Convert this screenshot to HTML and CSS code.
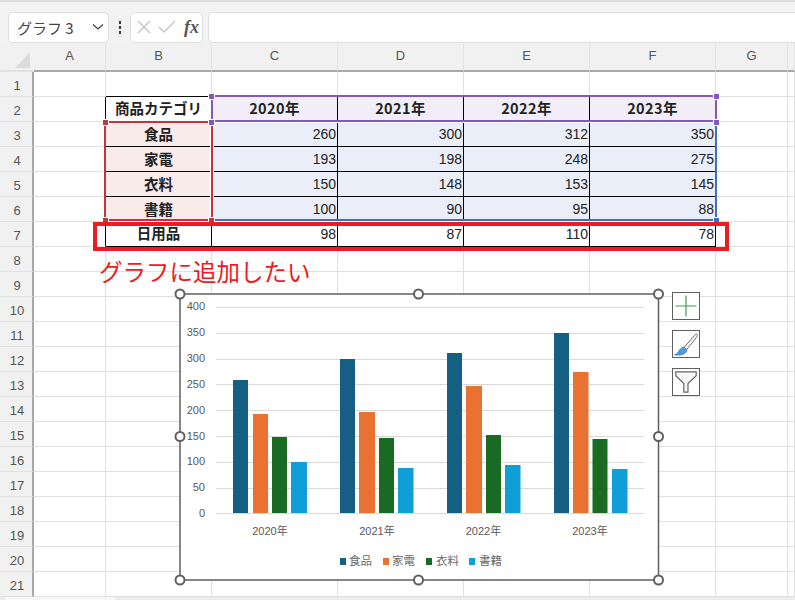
FILE: index.html
```html
<!DOCTYPE html>
<html lang="ja">
<head>
<meta charset="utf-8">
<title>グラフ 3</title>
<link rel="stylesheet" href="styles.css">
</head>
<body>
<div class="app">
  <div class="formula-bar">
    <div class="box name-box"><span>グラフ 3</span>
      <svg class="chev" width="12" height="8" viewBox="0 0 12 8"><path d="M1 1.5 L6 6 L11 1.5" fill="none" stroke="#444" stroke-width="1.3"/></svg>
    </div>
    <div class="dots"><i></i><i></i><i></i></div>
    <div class="box fx-box">
      <svg width="14" height="14" viewBox="0 0 14 14"><path d="M1 1 L13 13 M13 1 L1 13" stroke="#c4c4c4" stroke-width="1.3" fill="none"/></svg>
      <svg width="18" height="14" viewBox="0 0 18 14"><path d="M1 7 L6 12 L17 1" stroke="#c4c4c4" stroke-width="1.3" fill="none"/></svg>
      <span class="fx">fx</span>
    </div>
    <div class="box formula-input"></div>
  </div>

  <div class="sheet-wrap">
    <div class="sheet">
      <div class="hd corner"><span class="tri"></span></div><div class="hd">A</div><div class="hd">B</div><div class="hd">C</div><div class="hd">D</div><div class="hd">E</div><div class="hd">F</div><div class="hd">G</div><div class="hd"></div>

      <div class="rh">1</div><div class="c"></div><div class="c bb"></div><div class="c bb"></div><div class="c bb"></div><div class="c bb"></div><div class="c bb"></div><div class="c"></div><div class="c"></div>

      <div class="rh">2</div><div class="c br"></div><div class="c t lbl">商品カテゴリ</div><div class="c t yr">2020年</div><div class="c t yr">2021年</div><div class="c t yr">2022年</div><div class="c t yr">2023年</div><div class="c"></div><div class="c"></div>

      <div class="rh">3</div><div class="c br"></div><div class="c t cat">食品</div><div class="c t val">260</div><div class="c t val">300</div><div class="c t val">312</div><div class="c t val">350</div><div class="c"></div><div class="c"></div>

      <div class="rh">4</div><div class="c br"></div><div class="c t cat">家電</div><div class="c t val">193</div><div class="c t val">198</div><div class="c t val">248</div><div class="c t val">275</div><div class="c"></div><div class="c"></div>

      <div class="rh">5</div><div class="c br"></div><div class="c t cat">衣料</div><div class="c t val">150</div><div class="c t val">148</div><div class="c t val">153</div><div class="c t val">145</div><div class="c"></div><div class="c"></div>

      <div class="rh">6</div><div class="c br"></div><div class="c t cat">書籍</div><div class="c t val">100</div><div class="c t val">90</div><div class="c t val">95</div><div class="c t val">88</div><div class="c"></div><div class="c"></div>

      <div class="rh">7</div><div class="c br"></div><div class="c t lbl">日用品</div><div class="c t num">98</div><div class="c t num">87</div><div class="c t num">110</div><div class="c t num">78</div><div class="c"></div><div class="c"></div>

      <div class="rh">8</div><div class="c"></div><div class="c"></div><div class="c"></div><div class="c"></div><div class="c"></div><div class="c"></div><div class="c"></div><div class="c"></div>
      <div class="rh">9</div><div class="c"></div><div class="c"></div><div class="c"></div><div class="c"></div><div class="c"></div><div class="c"></div><div class="c"></div><div class="c"></div>
      <div class="rh">10</div><div class="c"></div><div class="c"></div><div class="c"></div><div class="c"></div><div class="c"></div><div class="c"></div><div class="c"></div><div class="c"></div>
      <div class="rh">11</div><div class="c"></div><div class="c"></div><div class="c"></div><div class="c"></div><div class="c"></div><div class="c"></div><div class="c"></div><div class="c"></div>
      <div class="rh">12</div><div class="c"></div><div class="c"></div><div class="c"></div><div class="c"></div><div class="c"></div><div class="c"></div><div class="c"></div><div class="c"></div>
      <div class="rh">13</div><div class="c"></div><div class="c"></div><div class="c"></div><div class="c"></div><div class="c"></div><div class="c"></div><div class="c"></div><div class="c"></div>
      <div class="rh">14</div><div class="c"></div><div class="c"></div><div class="c"></div><div class="c"></div><div class="c"></div><div class="c"></div><div class="c"></div><div class="c"></div>
      <div class="rh">15</div><div class="c"></div><div class="c"></div><div class="c"></div><div class="c"></div><div class="c"></div><div class="c"></div><div class="c"></div><div class="c"></div>
      <div class="rh">16</div><div class="c"></div><div class="c"></div><div class="c"></div><div class="c"></div><div class="c"></div><div class="c"></div><div class="c"></div><div class="c"></div>
      <div class="rh">17</div><div class="c"></div><div class="c"></div><div class="c"></div><div class="c"></div><div class="c"></div><div class="c"></div><div class="c"></div><div class="c"></div>
      <div class="rh">18</div><div class="c"></div><div class="c"></div><div class="c"></div><div class="c"></div><div class="c"></div><div class="c"></div><div class="c"></div><div class="c"></div>
      <div class="rh">19</div><div class="c"></div><div class="c"></div><div class="c"></div><div class="c"></div><div class="c"></div><div class="c"></div><div class="c"></div><div class="c"></div>
      <div class="rh">20</div><div class="c"></div><div class="c"></div><div class="c"></div><div class="c"></div><div class="c"></div><div class="c"></div><div class="c"></div><div class="c"></div>
      <div class="rh">21</div><div class="c"></div><div class="c"></div><div class="c"></div><div class="c"></div><div class="c"></div><div class="c"></div><div class="c"></div><div class="c"></div>
    </div>

    <!-- range selection overlays -->
    <div class="sel sel-blue"></div>
    <div class="sel sel-red"></div>
    <div class="sel sel-purple"></div>
    <span class="hdl h-p h1"></span><span class="hdl h-p h2"></span><span class="hdl h-p h3"></span><span class="hdl h-p h4"></span>
    <span class="hdl h-r h5"></span><span class="hdl h-r h6"></span><span class="hdl h-r h7"></span><span class="hdl h-b h8"></span>

    <!-- annotation -->
    <div class="callout"></div>
    <div class="note">グラフに追加したい</div>

    <!-- chart -->
    <svg class="chart" width="500" height="306" viewBox="170 284 500 306">
      <rect x="180" y="294" width="478.500" height="286" fill="#fff" stroke="#5f5f5f" stroke-width="1.500"/>
      <g stroke="#d9d9d9" stroke-width="1">
        <path d="M216 307.500H644M216 333.500H644M216 359.500H644M216 384.500H644M216 410.500H644M216 436.500H644M216 462.500H644M216 488.500H644M216 513.500H644"/>
      </g>
      <g fill="#156082">
        <rect x="233" y="380" width="15" height="133"/><rect x="340" y="359" width="15" height="154"/><rect x="447" y="353" width="15" height="160"/><rect x="554" y="333" width="15" height="180"/>
      </g>
      <g fill="#E97132">
        <rect x="253" y="414" width="15" height="99"/><rect x="359" y="412" width="16" height="101"/><rect x="466" y="386" width="16" height="127"/><rect x="573" y="372" width="15.500" height="141"/>
      </g>
      <g fill="#196B24">
        <rect x="272" y="437" width="15" height="76"/><rect x="379" y="438" width="15" height="75"/><rect x="486" y="435" width="15" height="78"/><rect x="592.500" y="439" width="15" height="74"/>
      </g>
      <g fill="#0F9ED5">
        <rect x="291" y="462" width="16" height="51"/><rect x="398" y="468" width="15.500" height="45"/><rect x="505" y="465" width="15.500" height="48"/><rect x="612" y="469" width="15.500" height="44"/>
      </g>
      <g class="ax" text-anchor="end">
        <text x="205" y="310">400</text><text x="205" y="336">350</text><text x="205" y="362">300</text><text x="205" y="388">250</text><text x="205" y="414">200</text><text x="205" y="440">150</text><text x="205" y="465">100</text><text x="205" y="491">50</text><text x="205" y="517">0</text>
      </g>
      <g class="ax" text-anchor="middle">
        <text x="270" y="535">2020年</text><text x="377" y="535">2021年</text><text x="483.500" y="535">2022年</text><text x="590" y="535">2023年</text>
      </g>
      <rect x="340" y="558" width="6" height="7" fill="#156082"/><text class="ax lg" x="349" y="565">食品</text>
      <rect x="383" y="558" width="6" height="7" fill="#E97132"/><text class="ax lg" x="392" y="565">家電</text>
      <rect x="426" y="558" width="6" height="7" fill="#196B24"/><text class="ax lg" x="436" y="565">衣料</text>
      <rect x="469" y="558" width="6" height="7" fill="#0F9ED5"/><text class="ax lg" x="479" y="565">書籍</text>
      <g fill="#fff" stroke="#5f5f5f" stroke-width="2">
        <circle cx="180" cy="294" r="4.500"/><circle cx="418.500" cy="294" r="4.500"/><circle cx="658.500" cy="294" r="4.500"/>
        <circle cx="180" cy="436.500" r="4.500"/><circle cx="658.500" cy="436.500" r="4.500"/>
        <circle cx="180" cy="580" r="4.500"/><circle cx="418.500" cy="580" r="4.500"/><circle cx="658.500" cy="580" r="4.500"/>
      </g>
    </svg>

    <div class="chart-tools">
      <div class="tool">
        <svg width="22" height="22" viewBox="0 0 22 22"><path d="M0.500 11H21.500M11 0.500V21.500" stroke="#3f9a50" stroke-width="1.200" fill="none"/></svg>
      </div>
      <div class="tool">
        <svg width="24" height="24" viewBox="0 0 24 24">
          <path d="M10 15.500 L20.500 3.500 C22 1.500 23.600 1.800 23.400 3.500 C22.800 5.500 17 12 12.500 17.800 Z" fill="#fff" stroke="#666" stroke-width="1"/>
          <path d="M9.500 15 L13 18.300 C12 22 7 23.800 0.500 22.800 C3.500 22 4 20.500 5.500 18 C6.500 16.500 8 15.600 9.500 15 Z" fill="#4f9be0" stroke="#2f79bf" stroke-width="0.800"/>
        </svg>
      </div>
      <div class="tool">
        <svg width="22" height="22" viewBox="0 0 22 22"><path d="M0.800 0.800H21.200V4.800L13 12.500V21.200H8.800V12.500L0.800 4.800Z" fill="#f7f7f7" stroke="#666" stroke-width="1.200"/></svg>
      </div>
    </div>
  </div>
  <div class="status-strip"><span class="tab"></span></div>
</div>
</body>
</html>
```
FILE: styles.css
```css
* { box-sizing: border-box; }
html, body { margin: 0; padding: 0; background: #fff; }
body { font-family: "Liberation Sans", "Noto Sans CJK JP", sans-serif; }
.app { width: 795px; height: 600px; overflow: hidden; background: #f1f1f1; display: flex; flex-direction: column; }

/* formula bar */
.formula-bar { height: 43px; flex: none; display: flex; align-items: center; gap: 5px; padding: 10px 0 1px 8px; border-top: 2px solid #dedede; background: #f3f3f3; }
.box { height: 31px; background: #fff; border: 1px solid #dfdfdf; border-radius: 5px; display: flex; align-items: center; }
.name-box { width: 101px; padding: 0 4px 0 8px; justify-content: space-between; font: 15px "Noto Sans CJK JP", sans-serif; color: #444; }
.dots { width: 12px; display: flex; flex-direction: column; align-items: center; gap: 2px; margin-right: -1px; }
.dots i { width: 2px; height: 3px; background: #333; }
.fx-box { width: 73px; gap: 7px; padding-left: 6px; }
.fx { font: italic bold 18px "Liberation Serif", serif; color: #555; margin-left: 1px; }
.formula-input { flex: 1; border-radius: 5px 0 0 5px; border-right: 0; }

/* sheet */
.sheet-wrap { position: relative; flex: none; height: 554px; }
.sheet { display: grid; grid-template-columns: 34px 72px 106px 126px 126px 126px 126px 72px 7px; grid-template-rows: 29px repeat(21, 25px); background: #fff; }
.hd { background: #f1f1f1; border-bottom: 2px solid #a8a8a8; border-right: 1px solid #e4e4e4; color: #555; font-size: 13px; display: flex; align-items: center; justify-content: center; padding-bottom: 2px; }
.corner { border-right: 0; border-bottom-color: #e2e2e2; padding-bottom: 0; }
.tri { width: 0; height: 0; border-style: solid; border-width: 0 0 16px 15px; border-color: transparent transparent #dcdcdc transparent; margin: 7px 0 0 11px; }
.rh { background: #f1f1f1; border-right: 2px solid #a8a8a8; border-bottom: 1px solid #e2e2e2; color: #555; font-size: 13px; display: flex; align-items: center; justify-content: center; padding: 2px 0 0 2px; }
.c { border-right: 1px solid #e0e0e0; border-bottom: 1px solid #e0e0e0; background: #fff; }
.bb { border-bottom-color: #000; }
.br { border-right-color: #000; }
.t { border-right-color: #000; border-bottom-color: #000; display: flex; align-items: center; font-size: 14px; color: #222; }
.lbl, .yr, .cat { justify-content: center; font-family: "Noto Sans CJK JP", sans-serif; font-weight: 700; font-size: 14.500px; }
.lbl, .yr { padding-bottom: 3px; }
.cat { padding-bottom: 2px; }
.yr { background: #f1eef8; letter-spacing: 0.400px; }
.cat { background: #f9ebea; }
.val, .num { justify-content: flex-end; padding-right: 1px; }
.val { background: #e9eef8; }
.num { background: #fff; }

/* range selection */
.sel { position: absolute; border: 2px solid; }
.sel-blue { left: 211px; top: 78px; width: 506px; height: 100px; border-color: #3b6fc0; box-shadow: 0 0 0 1px #fff; }
.sel-red { left: 104px; top: 78px; width: 109px; height: 100px; border-color: #c0363c; box-shadow: 0 0 0 1px #fff; }
.sel-purple { left: 211px; top: 52px; width: 506px; height: 27px; border-color: #8259b8; box-shadow: 0 0 0 1px #fff; }
.hdl { position: absolute; width: 5px; height: 5px; outline: 1px solid #fff; }
.h-p { background: #8259b8; }
.h-r { background: #c0363c; }
.h-b { background: #3b6fc0; }
.h1 { left: 209px; top: 51px; }
.h2 { left: 714px; top: 51px; }
.h3 { left: 209px; top: 77px; }
.h4 { left: 714px; top: 77px; }
.h5 { left: 103px; top: 77px; }
.h6 { left: 103px; top: 175px; }
.h7 { left: 209px; top: 175px; }
.h8 { left: 714px; top: 175px; }

/* annotation */
.callout { position: absolute; left: 93px; top: 179px; width: 636px; height: 29px; border: 4px solid #ed1c24; }
.note { position: absolute; left: 99px; top: 211px; font: 400 23.500px/34px "Noto Sans CJK JP", sans-serif; color: #ed1c24; white-space: nowrap; }

/* chart */
.chart { position: absolute; left: 170px; top: 241px; display: block; }
.ax { font: 11px "Liberation Sans", "Noto Sans CJK JP", sans-serif; fill: #595959; }
.lg { font-size: 11.500px; fill: #6b6b6b; }
.chart-tools { position: absolute; left: 672px; top: 249px; display: flex; flex-direction: column; gap: 10px; }
.tool { width: 28px; height: 28px; background: #fff; border: 1px solid #5f5f5f; display: flex; align-items: center; justify-content: center; }

/* bottom strip */
.status-strip { flex: 1; background: #ececec; padding-left: 5px; }
.tab { display: block; width: 110px; height: 3px; background: #f7f7f7; }
```
